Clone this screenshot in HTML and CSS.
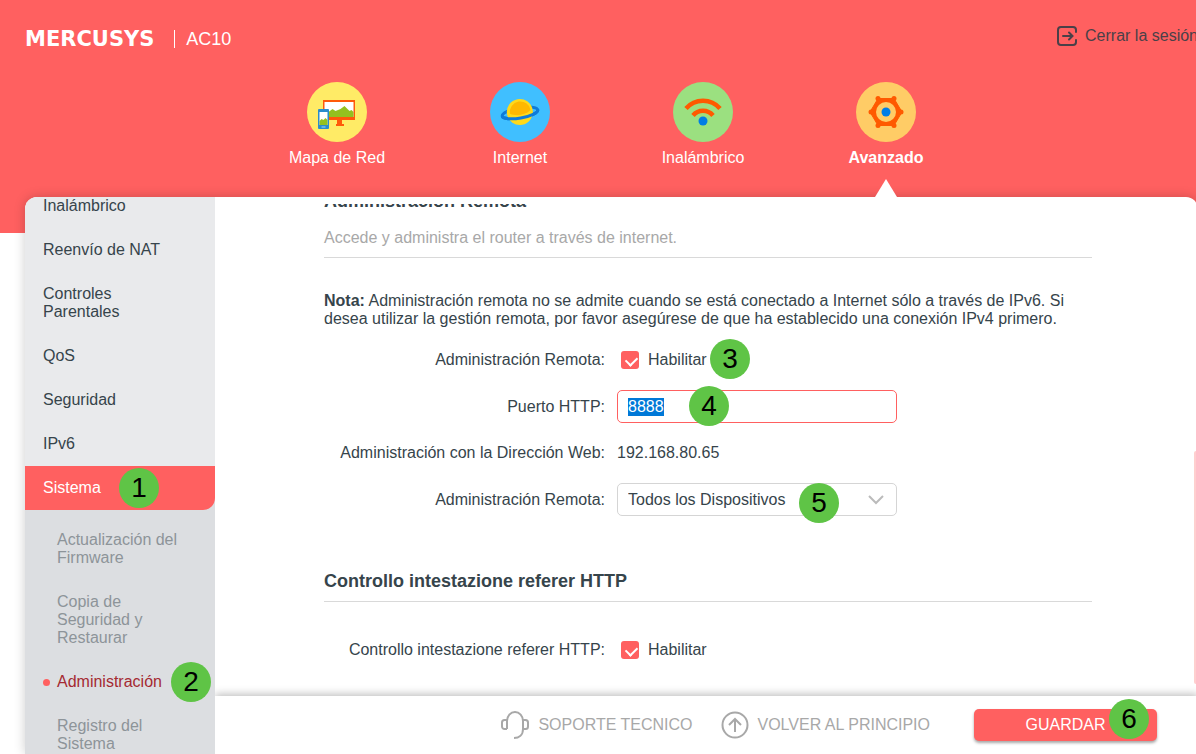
FILE: index.html
```html
<!DOCTYPE html>
<html lang="es">
<head>
    <meta charset="UTF-8">
    <meta name="viewport" content="width=device-width, initial-scale=1.0">
    <title>MERCUSYS AC10</title>
    <link rel="stylesheet" href="styles.css">
</head>
<body>
    <header class="header">
        <div class="top-bar">
            <div class="brand">
                <span class="logo">MERCUSYS</span>
                <span class="model">AC10</span>
            </div>
            <a class="logout" href="#">
                <svg width="20" height="20" viewBox="0 0 20 20" fill="none" stroke="currentColor" stroke-width="2" stroke-linecap="round">
                    <path d="M19 6V4a3 3 0 0 0-3-3H4a3 3 0 0 0-3 3v12a3 3 0 0 0 3 3h12a3 3 0 0 0 3-3v-2"/>
                    <path d="M6 10h9M12 6.500l3.500 3.500-3.500 3.500"/>
                </svg>
                Cerrar la sesión
            </a>
        </div>
        <nav class="main-nav">
            <a href="#">
                <svg width="60" height="60" viewBox="0 0 60 60">
                    <circle cx="30" cy="30" r="30" fill="#ffeb66"/>
                    <path d="M16 18h32v20H16z" fill="#ff5a0a"/>
                    <path d="M17.500 20h29v15h-29z" fill="#fff"/>
                    <path d="M17.500 35v-4l4-1 4-3 3 2 5-2 4-3 3 3 2 2 2-1 2 2v5z" fill="#94c11f"/>
                    <path d="M30 38h5v4h2v2h-8v-2h1z" fill="#ff5a0a"/>
                    <rect x="11" y="27" width="11" height="20" rx="1" fill="#2a8ccc"/>
                    <path d="M12.500 30h8v13h-8z" fill="#fff"/>
                    <path d="M12.500 43v-4l2-2 2 1 2-2 2 2v5z" fill="#94c11f"/>
                    <path d="M14.500 45h4" stroke="#9fd8ff"/>
                </svg>
                <span>Mapa de Red</span>
            </a>
            <a href="#">
                <svg width="60" height="60" viewBox="0 0 60 60">
                    <circle cx="30" cy="30" r="30" fill="#40bfff"/>
                    <g transform="rotate(-10 30 31)">
                        <ellipse cx="30" cy="31" rx="18" ry="5" fill="none" stroke="#0f7bd8" stroke-width="3"/>
                        <circle cx="30" cy="30" r="13" fill="#ffd91a"/>
                        <path d="M20 30a10.500 10.500 0 1 1 21 0c-6 4-15 4-21 0z" fill="#ffb800"/>
                        <path d="M12 31a18 5 0 0 0 36 0" fill="none" stroke="#0f7bd8" stroke-width="3"/>
                    </g>
                </svg>
                <span>Internet</span>
            </a>
            <a href="#">
                <svg width="60" height="60" viewBox="0 0 60 60">
                    <circle cx="30" cy="30" r="30" fill="#9be080"/>
                    <path d="M13 26.500a22.500 22.500 0 0 1 34 0M20 33.500a13 13 0 0 1 20 0" fill="none" stroke="#ff5a00" stroke-width="4.500"/>
                    <circle cx="30" cy="39" r="4.500" fill="#007de6"/>
                </svg>
                <span>Inalámbrico</span>
            </a>
            <a class="active" href="#">
                <svg width="60" height="60" viewBox="0 0 60 60">
                    <circle cx="30" cy="30" r="30" fill="#ffcc66"/>
                    <path d="M22 16.500h16l8 13.500-8 13.500H22L14 30z" fill="#ff5a00" stroke="#ff5a00" stroke-width="1" stroke-linejoin="round"/>
                    <g fill="#ff5a00">
                        <circle cx="22" cy="16.500" r="2.500"/>
                        <circle cx="38" cy="16.500" r="2.500"/>
                        <circle cx="45" cy="30" r="2.500"/>
                        <circle cx="38" cy="43.500" r="2.500"/>
                        <circle cx="22" cy="43.500" r="2.500"/>
                        <circle cx="15" cy="30" r="2.500"/>
                    </g>
                    <circle cx="30" cy="30" r="10" fill="#ffcc66"/>
                    <circle cx="30" cy="30" r="4.500" fill="#007de6"/>
                </svg>
                <span>Avanzado</span>
            </a>
        </nav>
    </header>

    <main class="panel">
        <aside class="sidebar">
            <ul class="menu">
                <li><a href="#">Inalámbrico</a></li>
                <li><a href="#">Reenvío de NAT</a></li>
                <li><a href="#">Controles Parentales</a></li>
                <li><a href="#">QoS</a></li>
                <li><a href="#">Seguridad</a></li>
                <li><a href="#">IPv6</a></li>
                <li class="open">
                    <a href="#">Sistema <span class="step step-1">1</span></a>
                    <ul class="submenu">
                        <li><a href="#">Actualización del Firmware</a></li>
                        <li><a href="#">Copia de Seguridad y Restaurar</a></li>
                        <li><a class="current" href="#">Administración <span class="step step-2">2</span></a></li>
                        <li><a href="#">Registro del Sistema</a></li>
                    </ul>
                </li>
            </ul>
        </aside>

        <section class="content">
            <form class="settings" id="settings">
                <h2 class="first">Administración Remota</h2>
                <p class="desc">Accede y administra el router a través de internet.</p>
                <p class="note"><b>Nota:</b> Administración remota no se admite cuando se está conectado a Internet sólo a través de IPv6. Si desea utilizar la gestión remota, por favor asegúrese de que ha establecido una conexión IPv4 primero.</p>

                <div class="fields">
                    <span class="label" id="remote-label">Administración Remota:</span>
                    <label class="check">
                        <input type="checkbox" aria-describedby="remote-label" checked>
                        Habilitar
                        <span class="step step-3">3</span>
                    </label>

                    <label class="label" for="port">Puerto HTTP:</label>
                    <div class="control">
                        <input class="text" type="text" id="port" value="8888">
                        <span class="step step-4">4</span>
                    </div>

                    <span class="label">Administración con la Dirección Web:</span>
                    <span>192.168.80.65</span>

                    <label class="label" for="devices">Administración Remota:</label>
                    <div class="control">
                        <select id="devices">
                            <option>Todos los Dispositivos</option>
                        </select>
                        <svg class="arrow" width="16" height="10" viewBox="0 0 16 10" fill="none" stroke="#bbb" stroke-width="2">
                            <path d="M1 1l7 7 7-7"/>
                        </svg>
                        <span class="step step-5">5</span>
                    </div>
                </div>

                <h2>Controllo intestazione referer HTTP</h2>
                <div class="fields">
                    <span class="label" id="referer-label">Controllo intestazione referer HTTP:</span>
                    <label class="check">
                        <input type="checkbox" aria-describedby="referer-label" checked>
                        Habilitar
                    </label>
                </div>
            </form>
            <div class="scrollbar"></div>

            <footer class="footer">
                <a href="#">
                    <svg width="28" height="28" viewBox="0 0 28 28" fill="none" stroke="currentColor" stroke-width="2">
                        <path d="M6 18V10a8 9 0 0 1 16 0v8c0 6-4 9-9 9"/>
                        <path d="M6 9H3.500A2.500 2.500 0 0 0 1 11.500v4A2.500 2.500 0 0 0 3.500 18H6M22 9h2.500a2.500 2.500 0 0 1 2.500 2.500v4a2.500 2.500 0 0 1-2.500 2.500H22"/>
                    </svg>
                    SOPORTE TECNICO
                </a>
                <a href="#">
                    <svg width="28" height="28" viewBox="0 0 28 28" fill="none" stroke="currentColor" stroke-width="2">
                        <circle cx="14" cy="14" r="12.500"/>
                        <path d="M14 21V8M8 14l6-6 6 6"/>
                    </svg>
                    VOLVER AL PRINCIPIO
                </a>
                <button type="submit" form="settings">GUARDAR <span class="step step-6">6</span></button>
            </footer>
        </section>
    </main>

    <script>
        const port = document.getElementById('port');
        port.focus();
        port.select();
    </script>
</body>
</html>
```
FILE: styles.css
```css
* {
    box-sizing: border-box;
}

body {
    margin: 0;
    height: 100vh;
    display: flex;
    flex-direction: column;
    overflow: hidden;
    background: #fff;
    color: #36444b;
    font-family: Arial, "Liberation Sans", sans-serif;
    font-size: 16px;
    line-height: 18px;
}

a {
    color: inherit;
    text-decoration: none;
}

ul {
    list-style: none;
    margin: 0;
    padding: 0;
}

/* Header */
.header {
    flex: none;
    padding: 24px 0 36px 25px;
    background: #ff6060;
    color: #fff;
}

.top-bar {
    display: flex;
    justify-content: space-between;
    align-items: flex-start;
    height: 30px;
}

.brand {
    display: flex;
    align-items: center;
    height: 30px;
}

.logo {
    font-family: "DejaVu Sans", Verdana, sans-serif;
    font-size: 21px;
    font-weight: bold;
}

.model {
    margin-left: 20px;
    padding-left: 11px;
    border-left: 1px solid #fff;
    font-size: 18px;
}

.logout {
    display: flex;
    align-items: center;
    gap: 8px;
    height: 24px;
    margin-right: -2px;
    color: #4a4048;
    white-space: nowrap;
}

.main-nav {
    display: flex;
    justify-content: center;
    margin: 28px -2px 0 0;
}

.main-nav a {
    position: relative;
    display: flex;
    flex-direction: column;
    align-items: center;
    gap: 7px;
    width: 183px;
    height: 115px;
}

.main-nav .active {
    font-weight: bold;
}

.main-nav .active::after {
    content: "";
    position: absolute;
    bottom: 0;
    border: 11px solid transparent;
    border-top: 0;
    border-bottom: 18px solid #fff;
    z-index: 2;
}

/* Panel */
.panel {
    flex: 1;
    min-height: 0;
    display: flex;
    margin: -36px -2px 0 25px;
    border-radius: 12px 12px 0 0;
    background: #fff;
    box-shadow: 0 0 12px rgba(0, 0, 0, 0.2);
}

.sidebar {
    position: relative;
    z-index: 1;
    flex: none;
    width: 190px;
    overflow: hidden;
    border-radius: 12px 0 0 0;
    background: #e9eaec;
}

.menu {
    margin-top: -13px;
}

.menu a {
    position: relative;
    display: block;
    padding: 13px 50px 13px 18px;
}

.menu .open {
    background: #dcdee1;
}

.open > a {
    border-radius: 0 0 12px 0;
    background: #ff6060;
    color: #fff;
}

.submenu {
    padding-top: 8px;
    color: #8d9499;
}

.submenu a {
    padding: 13px 30px 13px 32px;
}

.submenu .current {
    color: #a52a32;
}

.submenu .current::before {
    content: "";
    position: absolute;
    left: 18px;
    top: 19px;
    width: 7px;
    height: 7px;
    border-radius: 50%;
    background: #ff6060;
}

/* Content */
.content {
    position: relative;
    flex: 1;
    min-width: 0;
    display: flex;
    flex-direction: column;
}

.settings {
    flex: 1;
    min-height: 0;
    margin-top: 7px;
    padding: 0 106px 0 109px;
    overflow: hidden;
}

h2 {
    margin: 53px 0 38px;
    padding-bottom: 8px;
    border-bottom: 1px solid #d9d9d9;
    font-size: 18px;
    line-height: 24px;
}

h2.first {
    margin: -15px 0 16px;
    padding: 0;
    border: 0;
}

.desc {
    margin: 0 0 34px;
    padding-bottom: 10px;
    border-bottom: 1px solid #d9d9d9;
    color: #a8a8a8;
}

.note {
    margin: 0 0 22px;
}

.fields {
    display: grid;
    grid-template-columns: 281px 280px;
    gap: 20px 12px;
    align-items: center;
    line-height: 20px;
}

.label {
    text-align: right;
}

.control,
.check {
    position: relative;
}

.check {
    display: flex;
    align-items: center;
    gap: 9px;
    padding-left: 4px;
}

.check input {
    appearance: none;
    width: 18px;
    height: 18px;
    margin: 0;
    border-radius: 3px;
    background: #ff6060;
}

.check input:checked::before {
    content: "";
    display: block;
    width: 9px;
    height: 6px;
    margin: 5px;
    border: solid #fff;
    border-width: 0 0 2px 2px;
    transform: rotate(-45deg);
}

.text,
select {
    display: block;
    width: 100%;
    height: 33px;
    padding: 0 10px;
    border: 1px solid #d5d5d5;
    border-radius: 5px;
    outline: none;
    appearance: none;
    background: #fff;
    color: inherit;
    font: inherit;
}

.text:focus {
    border-color: #ff6060;
}

.text::selection {
    background: #0078d7;
    color: #fff;
}

.arrow {
    position: absolute;
    right: 13px;
    top: 12px;
    pointer-events: none;
}

.scrollbar {
    position: absolute;
    right: 0;
    top: 254px;
    bottom: 70px;
    width: 4px;
    border-radius: 2px;
    background: #ffcfcf;
}

/* Footer */
.footer {
    flex: none;
    display: flex;
    justify-content: flex-end;
    align-items: center;
    gap: 28px;
    height: 58px;
    padding-right: 41px;
    background: #fff;
    box-shadow: 0 -2px 8px rgba(0, 0, 0, 0.25);
    color: #a8a8a8;
}

.footer a {
    display: flex;
    align-items: center;
    gap: 9px;
}

.footer button {
    position: relative;
    width: 183px;
    height: 32px;
    margin-left: 16px;
    border: 0;
    border-radius: 5px;
    background: #ff6060;
    box-shadow: 0 2px 3px rgba(0, 0, 0, 0.35);
    color: #fff;
    font: inherit;
}

/* Numbered steps */
.step {
    position: absolute;
    z-index: 3;
    width: 40px;
    height: 40px;
    border-radius: 50%;
    background: #5fc446;
    color: #000;
    font-size: 28px;
    line-height: 40px;
    text-align: center;
}

.step-1 {
    left: 94px;
    top: 2px;
}

.step-2 {
    left: 146px;
    top: 2px;
}

.step-3 {
    left: 93px;
    top: -11px;
}

.step-4 {
    left: 72px;
    top: -4px;
}

.step-5 {
    left: 182px;
    top: 0;
}

.step-6 {
    right: 8px;
    top: -10px;
}
```
